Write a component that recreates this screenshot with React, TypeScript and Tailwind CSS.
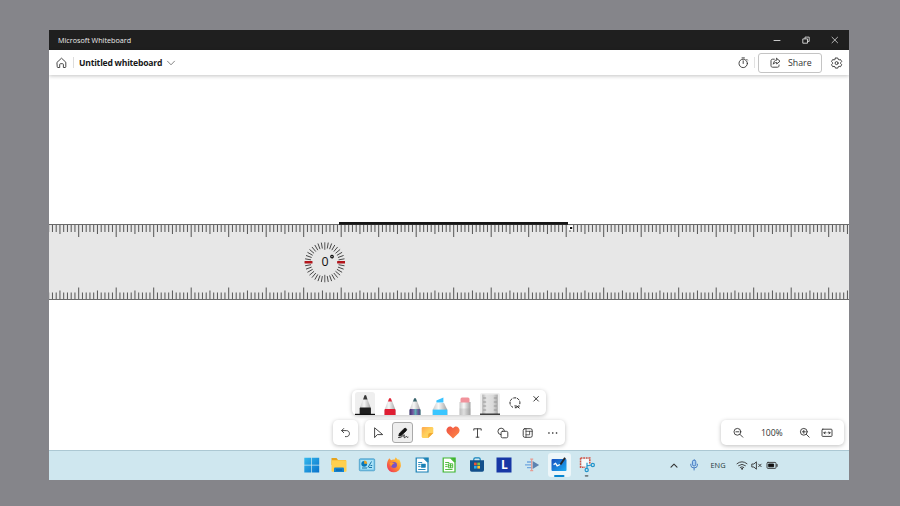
import type { ReactNode } from "react";

type IconProps = { w?: number; h?: number; className?: string; children: ReactNode };

function Icon({ w = 12, h = 12, className = "", children }: IconProps) {
  return (
    <svg
      width={w}
      height={h}
      viewBox={`0 0 ${w} ${h}`}
      fill="none"
      stroke="#333"
      strokeWidth={0.9}
      strokeLinecap="round"
      strokeLinejoin="round"
      className={`block shrink-0 ${className}`}
    >
      {children}
    </svg>
  );
}

function TitleBar() {
  return (
    <div className="flex h-5 shrink-0 items-center bg-[#1f1f1f] pl-[9px] pr-[10px]">
      <span className="flex-1 whitespace-nowrap pt-[2px] text-[7.2px] leading-none text-[#ececec]">Microsoft Whiteboard</span>
      <div className="flex items-center gap-[21px]">
        <Icon w={8} h={8}><path d="M1 4.5h6" stroke="#ddd" /></Icon>
        <Icon w={8} h={8}><path d="M1.2 2.9h4.3v4.3H1.2zM3 2.6V1.1h4.2v4.3H5.8" stroke="#ddd" /></Icon>
        <Icon w={8} h={8}><path d="M1 1.2l5.6 5.6M6.6 1.2L1 6.8" stroke="#ddd" strokeWidth={0.8} /></Icon>
      </div>
    </div>
  );
}

function Header() {
  return (
    <header className="flex h-[25px] shrink-0 items-center bg-white pl-[7px] pr-[6px] shadow-[0_1px_4px_rgba(0,0,0,0.24)]">
      <Icon>
        <path d="M1.2 5.2L5.5 1.2l4.3 4v4.6c0 .4-.2.7-.6.7H7.4V7.5c0-.5-.3-.8-.8-.8H4.5c-.5 0-.8.3-.8.8v3H1.8c-.4 0-.6-.3-.6-.7z" />
      </Icon>
      <div className="ml-[5px] h-[11px] w-px bg-[#ddd]" />
      <span className="ml-[5px] w-[83px] whitespace-nowrap pt-[2px] text-[8.6px] leading-none font-bold tracking-[-0.22px] text-[#171717]">Untitled whiteboard</span>
      <Icon w={10} h={8} className="ml-[4px]"><path d="M1.5 2.2L5 5.8l3.5-3.6" stroke="#666" strokeWidth={0.8} /></Icon>
      <div className="flex-1" />
      <Icon>
        <circle cx="6.2" cy="6.4" r="4.2" />
        <path d="M5 .9h2.4M6.2 3.8v2.7M9.7 2.3l.8.8" />
      </Icon>
      <div className="ml-[5px] h-[11px] w-px bg-[#e2e2e2]" />
      <button className="ml-[3px] flex h-5 w-[64px] items-center rounded-[3px] border border-[#c4c4c4] bg-white pl-[10px]">
        <Icon>
          <path d="M5.3 2.2H3.5c-.9 0-1.5.6-1.5 1.5v5c0 .9.6 1.5 1.5 1.5h5c.9 0 1.5-.6 1.5-1.5V8" />
          <path d="M7.7 1.4L11 4.2 7.7 7V5.5c-1.6 0-2.5.5-3.4 1.7.2-2.5 1.4-4 3.4-4.2z" />
        </Icon>
        <span className="ml-[7px] pt-px text-[8.8px] leading-none text-[#333]">Share</span>
      </button>
      <Icon className="ml-[9px]">
        <path d="M4.4 1h2.4l.4 1.4.9.5 1.4-.4 1.2 2.1-1 1v1.1l1 1-1.2 2-1.4-.4-.9.5-.4 1.3H4.4L4 9.8l-.9-.5-1.4.4-1.2-2 1-1V5.6l-1-1 1.2-2.1 1.4.4.9-.5z" />
        <circle cx="5.6" cy="6.1" r="1.5" />
      </Icon>
    </header>
  );
}

function Ruler() {
  const ticks = Array.from({ length: 214 }, (_, i) => {
    const kind = (i + 2) % 10 === 0 ? 12 : (i + 7) % 10 === 0 ? 9 : 7;
    return { x: -0.3 + i * 3.75, length: kind };
  });
  const dial = Array.from({ length: 36 }, (_, i) => i * 10);
  return (
    <svg width="800" height="79" viewBox="0 0 800 79" className="block shrink-0">
      <rect x="0" y="2" width="800" height="76" fill="#e7e7e7" />
      <path d="M0 2.5H800M0 77.5H800" stroke="#6a6a6a" strokeWidth="1" />
      {ticks.map(({ x, length }) => (
        <path key={x} d={`M${x} 3v${length}M${x} 77v-${length - 0.5}`} stroke="#555" strokeWidth="1" />
      ))}
      <rect x="290" y="0" width="229" height="2.8" fill="#151515" />
      <rect x="519.5" y="3.2" width="4.5" height="5" fill="#fff" />
      <rect x="521" y="5" width="2.2" height="2" fill="#111" />
      <g transform="translate(275.8 40.3)">
        {dial.map((a) => (
          <path
            key={a}
            d={a % 90 === 0 ? "M0 -20V-12.5" : "M0 -20V-14"}
            transform={`rotate(${a})`}
            stroke="#3c3c3c"
            strokeWidth="0.85"
          />
        ))}
        <path d="M-20.2 0h7.8M12.4 0h7.8" stroke="#b3151b" strokeWidth="2.4" />
        <text x="-3.4" y="3.4" fontSize="12.4" fill="#111" fontFamily="Open Sans, sans-serif">0</text>
        <circle cx="7.2" cy="-5.7" r="1.3" fill="none" stroke="#111" strokeWidth="1.2" />
      </g>
    </svg>
  );
}

function Pen({ tip, fill, band }: { tip: string; fill: string; band: number }) {
  return (
    <svg width="12" height="18" viewBox="0 0 12 18" className="block shrink-0">
      <path d="M.5 18v-5L3.9 4h4.2l3.4 9v5z" fill="url(#barrel)" />
      <path d="M3.9 4.6L5.1 1.4q.9-1 1.8 0l1.2 3.2z" fill={tip} />
      <path d={`M.9 ${band}h10.2l.4 1.4V18H.5v-${16.6 - band}z`} fill={fill} />
    </svg>
  );
}

function PenTray() {
  return (
    <div className="ml-[303px] flex h-[25px] w-[194px] items-end rounded-[5px] bg-white pl-[3px] shadow-[0_1px_4px_rgba(0,0,0,0.25)]">
      <svg width="0" height="0" className="block">
        <defs>
          <linearGradient id="barrel">
            <stop offset="0" stopColor="#c9c9c9" />
            <stop offset=".4" stopColor="#f7f7f7" />
            <stop offset="1" stopColor="#a2a2a2" />
          </linearGradient>
          <linearGradient id="plastic">
            <stop offset="0" stopColor="#b4b4b4" />
            <stop offset=".25" stopColor="#e4e4e4" />
            <stop offset=".7" stopColor="#dadada" />
            <stop offset="1" stopColor="#a8a8a8" />
          </linearGradient>
          <linearGradient id="galaxy" x1="0" y1="0" x2="1" y2="0">
            <stop offset="0" stopColor="#37306d" />
            <stop offset=".3" stopColor="#7656a0" />
            <stop offset=".55" stopColor="#5cb0b4" />
            <stop offset=".8" stopColor="#6a4f98" />
            <stop offset="1" stopColor="#2f6a7c" />
          </linearGradient>
        </defs>
      </svg>
      <div className="flex h-[23px] w-5 flex-col items-center justify-end rounded-t-[3px] bg-[#efefef]">
        <svg width="20" height="22" viewBox="0 0 20 22" className="block">
          <path d="M4.7 21v-6L8.2 6h4.2l3.4 9v6z" fill="url(#barrel)" />
          <path d="M8.1 6.5l1.3-3.9q.9-1 1.8 0l1.3 3.9z" fill="#3a3a3a" />
          <path d="M5.1 14.6h10.4l.4 1V21H4.7v-5.4z" fill="#1f1f1f" />
          <path d="M0 21.4h20" stroke="#111" strokeWidth="1.2" />
        </svg>
      </div>
      <div className="ml-[9px]"><Pen tip="#df2638" fill="#df1d32" band={12} /></div>
      <div className="ml-[13px]"><Pen tip="#38636b" fill="url(#galaxy)" band={12} /></div>
      <svg width="16" height="18" viewBox="0 0 16 18" className="ml-[11px] block shrink-0">
        <path d="M.7 18v-5.2L4 6h8l3.3 6.8V18z" fill="url(#barrel)" />
        <path d="M4.4 5.6V3.4L11.4.6v5z" fill="#3ac3ff" />
        <path d="M.7 12.6h14.6V18H.7z" fill="#3ac6ff" />
      </svg>
      <svg width="12" height="18" viewBox="0 0 12 18" className="ml-[11px] block shrink-0">
        <path d="M.5 5h11v13H.5z" fill="url(#barrel)" />
        <path d="M1.5 5.5V2q0-1.5 1.5-1.5h6q1.5 0 1.5 1.5v3.5z" fill="#f1929b" />
        <path d="M.5 11.5h11V18H.5z" fill="#999" opacity=".25" />
      </svg>
      <svg width="20" height="23" viewBox="0 0 20 23" className="ml-[9px] block shrink-0">
        <path d="M0 22V3q0-2 2-2h16q2 0 2 2v19z" fill="#efefef" />
        <path d="M2.2 22V2.5h15.6V22z" fill="url(#plastic)" />
        <path d="M3.2 6h3M3.2 10h3M3.2 14h3M3.2 18h3M16.8 6h-3M16.8 10h-3M16.8 14h-3M16.8 18h-3" stroke="#8a8a8a" strokeWidth=".8" />
        <path d="M0 22.2h20" stroke="#111" strokeWidth="1.2" />
      </svg>
      <Icon w={14} h={14} className="mb-[5px] ml-[8px]">
        <path d="M4.6 11.2A5 5 0 1 1 11.8 8" stroke="#222" strokeDasharray="2.1 1.8" strokeWidth={1} />
        <path d="M6.8 9.8q2.4-.6 4.4 2.2M7.2 11.8q1.6.2 2.2-1t2-.8" stroke="#222" strokeWidth={1} />
      </Icon>
      <Icon w={8} h={8} className="mb-[12px] ml-[10px]"><path d="M1.8 1.5l4.6 4.6M6.4 1.5L1.8 6.1" stroke="#222" /></Icon>
    </div>
  );
}

const panel = "flex h-[25px] items-center rounded-[5px] bg-white shadow-[0_1px_4px_rgba(0,0,0,0.26)]";

function ToolRow() {
  return (
    <div className="mt-[5px] flex pl-[284px] pr-[5px]">
      <div className={`${panel} w-[25px] justify-center`}>
        <Icon><path d="M3.7 1.5L1.6 3.6l2.1 2.1M1.8 3.6h4.7c3.9 0 3.9 6 0 6H5.4" /></Icon>
      </div>
      <div className={`${panel} ml-[7px] w-[200px] pl-[7px]`}>
        <Icon className="mr-[8px]"><path d="M2.6 1.2v9.4l2.7-3h5z" /></Icon>
        <div className="mr-[8px] flex h-[21px] w-[21px] items-center justify-center rounded-[3px] border border-[#aaa] bg-[#eee]">
          <Icon w={14} h={14}>
            <path d="M3.4 7.6L2.8 9.9l2.4-.4 5-4.8q.9-1.1 0-2t-2 0z" fill="#111" stroke="#111" />
            <path d="M2.6 11.6q3 0 4.8-2.4 1.4-1 .8.6-.8 1.8.2 1.8t1.4-.9q.7-.5 1 .3.3.6 1.2.2" stroke="#111" />
          </Icon>
        </div>
        <svg width="13" height="13" viewBox="0 0 13 13" className="mr-[12px] block">
          <defs><linearGradient id="sticky" x2="1" y2="1"><stop stopColor="#ffa64c" /><stop offset=".5" stopColor="#ffd15d" /></linearGradient></defs>
          <path d="M2 1h9q1.3 0 1.3 1.3V7L7.2 12H2.3Q.7 12 .7 10.5V2.4Q.7 1 2 1z" fill="url(#sticky)" />
          <path d="M12.3 7L7.2 12V8.7Q7.2 7 8.8 7z" fill="#f2a832" />
        </svg>
        <svg width="14" height="13" viewBox="0 0 14 13" className="mr-[11px] block">
          <defs><linearGradient id="heart" x2="1" y2="1"><stop stopColor="#ee5145" /><stop offset="1" stopColor="#ff8b45" /></linearGradient></defs>
          <path d="M7 12.5L1.3 7C-1.8 2.5 4-2.3 7 2.2c3-4.5 8.8.3 5.7 4.8z" fill="url(#heart)" />
        </svg>
        <Icon className="mr-[14px]"><path d="M2.8 3.2V1.8h7.4v1.4M6.5 1.8v8.4M5.1 10.2h2.8" /></Icon>
        <Icon className="mr-[13px]">
          <path d="M3.7 7.7A3.3 3.3 0 1 1 7.5 4" />
          <rect x="4.1" y="4.3" width="6.7" height="6.5" rx="1.4" />
        </Icon>
        <Icon className="mr-[13px]">
          <rect x="1.2" y="1.7" width="9" height="8.6" rx="1.6" />
          <path d="M4 1.8v8.4M4 4.3h6.2M4 7.8h3.6V4.3" strokeWidth={0.75} />
        </Icon>
        <Icon><path d="M1.9 6h.1M5.7 6h.1M9.5 6h.1" stroke="#222" strokeWidth={1.6} /></Icon>
      </div>
      <div className="flex-1" />
      <div className={`${panel} w-[123px] pl-[12px]`}>
        <Icon>
          <circle cx="4.4" cy="4.8" r="3.4" /><path d="M7 7.4l2.8 2.8M2.9 4.8h3" />
        </Icon>
        <span className="ml-[16px] w-[23px] whitespace-nowrap pt-[2px] text-[8.7px] leading-none tracking-[-0.1px] text-[#333]">100%</span>
        <Icon className="ml-[15px]">
          <circle cx="4.8" cy="4.8" r="3.4" /><path d="M7.4 7.4l2.8 2.8M3.3 4.8h3M4.8 3.3v3" />
        </Icon>
        <Icon className="ml-[10px]">
          <rect x="1" y="2.2" width="10" height="7.2" rx=".8" />
          <path d="M5 5.8H2.9M3.9 4.8l-1 1 1 1M7 5.8h2.1M8.1 4.8l1 1-1 1" />
        </Icon>
      </div>
    </div>
  );
}

function AppIcon({ children, active }: { children: ReactNode; active?: boolean }) {
  return (
    <div className={active ? "flex h-[24px] w-[23px] items-center justify-center rounded-[3px] bg-[#edf6f9]" : "flex h-[24px] w-[23px] items-center justify-center"}>
      <svg width="18" height="20" viewBox="0 0 18 20" className="block overflow-visible">{children}</svg>
    </div>
  );
}

function DocIcon({ color, sheet }: { color: string; sheet?: boolean }) {
  return (
    <g stroke={color} fill="none">
      <path d="M3.2 3h7.5L15 7.2V17H3.2z" fill="#fff" strokeWidth="1.2" />
      <path d="M11.2 2.7h4.3V7z" fill={color} strokeWidth=".5" />
      <path d="M5.2 7.5h4M5.2 9.6h2.4M5.2 11.6h2.4M5.2 14.5h7.3" strokeWidth=".9" />
      {sheet ? (
        <path d="M8.4 8.8h4.3v4H8.4zM8.4 10.8h4.3M10.5 8.8v4" strokeWidth=".9" />
      ) : (
        <rect x="8.3" y="9" width="4.2" height="3.5" fill={color} strokeWidth=".5" />
      )}
    </g>
  );
}

function Taskbar() {
  return (
    <footer className="flex h-[30px] shrink-0 items-center border-t border-[#acc8d3] bg-[#cfe7ef] pl-[251px]">
      <div className="-mt-px flex gap-[4.55px]">
        <AppIcon>
          <defs><linearGradient id="win" x2="1" y2="1"><stop stopColor="#35b9ed" /><stop offset="1" stopColor="#0872cb" /></linearGradient></defs>
          <path d="M1.3 2.8h7v7h-7zM9 2.8h7.2v7H9zM1.3 10.5h7v7h-7zM9 10.5h7.2v7H9z" fill="url(#win)" />
        </AppIcon>
        <AppIcon>
          <path d="M1.5 3h5l1.5 2h8v5H1.5z" fill="#e6a31c" />
          <rect x="1.5" y="5.2" width="15" height="11.5" rx=".7" fill="#ffd04e" />
          <path d="M4 17v-3.5q0-1 1-1h8q1 0 1 1V17z" fill="#1683ce" />
          <path d="M6 15h6" stroke="#075c9e" />
        </AppIcon>
        <AppIcon>
          <rect x="1.3" y="3.8" width="15.4" height="12" rx="1" fill="#6fc1e6" stroke="#3d96c4" strokeWidth=".7" />
          <rect x="2.5" y="5" width="13" height="9.5" fill="#a9e2f7" />
          <circle cx="6.2" cy="8.8" r="2.9" fill="#0878ba" /><path d="M6.2 8.8V5.4q3 .3 3 3.4z" fill="#f5a51e" />
          <path d="M10 12.5l3.5-6M4 13h5M11 12.5h3M12.5 10.5h1.7" stroke="#1875a7" strokeWidth="1" />
        </AppIcon>
        <AppIcon>
          <defs><linearGradient id="fox" x1="1" x2="0" y2="1"><stop stopColor="#ffe33d" /><stop offset=".45" stopColor="#ff922e" /><stop offset="1" stopColor="#ec2264" /></linearGradient></defs>
          <path d="M4.2 3.2l1.9 2Q8 4.2 9.4 4.7L10.8 2.2q1 1.7 2.4 2.8l.7-1.1q3 4.5 1.5 8.6a6.9 6.9 0 0 1-13.2-.3Q1.2 7.8 4.2 3.2z" fill="url(#fox)" />
          <circle cx="9" cy="10" r="3" fill="#7952c6" />
          <path d="M4.5 8.2q2.6-1.8 5.2.4-3 .4-3.1 2.7-1.2-.2-2.1-3.1z" fill="#ff9b27" />
        </AppIcon>
        <AppIcon><DocIcon color="#1880b5" /></AppIcon>
        <AppIcon><DocIcon color="#3fb62e" sheet /></AppIcon>
        <AppIcon>
          <path d="M5.8 6V4.2q0-1.4 1.4-1.4h3.6q1.4 0 1.4 1.4V6" fill="none" stroke="#1483bc" strokeWidth="1.2" />
          <path d="M2 5.3h14v9.8q0 1.7-1.7 1.7H3.7Q2 16.8 2 15.1z" fill="#124f8b" />
          <path d="M6 7.6h2.7v2.7H6z" fill="#ef5433" /><path d="M9.3 7.6H12v2.7H9.3z" fill="#84c044" />
          <path d="M6 10.9h2.7v2.7H6z" fill="#2daeea" /><path d="M9.3 10.9H12v2.7H9.3z" fill="#ffc22f" />
        </AppIcon>
        <AppIcon>
          <rect x="1.5" y="2.5" width="15" height="15" fill="#1737a5" />
          <text x="6" y="14.2" fontSize="12" fontWeight="700" fontFamily="Open Sans, sans-serif" fill="#fff">L</text>
        </AppIcon>
        <AppIcon>
          <path d="M4 7h5M2 9.8h6M4 12.7h5" stroke="#70a8df" strokeWidth="1.3" />
          <path d="M9.6 6l6.5 4-6.5 4z" fill="#5d83b1" />
          <path d="M7.2 4.2h3M8.7 4.2v11.4M7.2 15.6h3" fill="none" stroke="#e79b92" strokeWidth="1.2" />
        </AppIcon>
        <AppIcon active>
          <defs><linearGradient id="wb" x2="1" y2="1"><stop stopColor="#174dbd" /><stop offset="1" stopColor="#1dadf2" /></linearGradient></defs>
          <rect x="1.5" y="4" width="15" height="12" rx="1" fill="url(#wb)" />
          <path d="M3.6 9.6l2-1.3 1.6 2.6L10 9.5" fill="none" stroke="white" strokeWidth="1.3" />
          <path d="M10.4 9.5l4.7-6.7" stroke="#24272c" strokeWidth="2" />
          <path d="M5 21h8.5" stroke="#0785cf" strokeWidth="2" strokeLinecap="round" />
        </AppIcon>
        <AppIcon>
          <path d="M2.6 3h9.2v5.4M2.6 3v9.2h4.6" fill="none" stroke="#d65343" strokeWidth="1.6" strokeDasharray="1.8 .8" />
          <path d="M3.6 4h7.2v7.2H3.6z" fill="#f6f9fa" />
          <g fill="none" stroke="#2295cb" strokeWidth="1.2"><path d="M9 7.8v5.6M8.8 11l4.4-1" /><circle cx="8.7" cy="15" r="1.6" /><circle cx="14.8" cy="10" r="1.6" /></g>
          <path d="M7.6 20.8h2" stroke="#717c80" strokeWidth="1.7" strokeLinecap="round" />
        </AppIcon>
      </div>
      <div className="flex items-center pl-[70.5px]">
        <Icon w={10} h={10}><path d="M2 6.2l3-3 3 3" strokeWidth={1.1} /></Icon>
        <Icon w={10} h={12} className="-mt-px ml-[10px]">
          <rect x="3.4" y="1" width="3.4" height="6" rx="1.7" fill="#a8cef1" stroke="#3972bd" />
          <path d="M1.8 5.2v1q0 2.7 3.3 2.7t3.3-2.7v-1M5.1 9v2" stroke="#3972bd" />
        </Icon>
        <span className="ml-[11.5px] w-[15.5px] whitespace-nowrap text-[7.4px] leading-none text-[#28383c]">ENG</span>
        <Icon className="ml-[10px]">
          <path d="M1 3.7q5-4 10 0M2.6 5.6q3.4-2.7 6.8 0M4.2 7.4q1.8-1.4 3.6 0" /><circle cx="6" cy="8.8" r=".5" fill="#333" />
        </Icon>
        <Icon className="ml-[3px]"><path d="M1.2 4h1.7l2.5-2.2v7.4L2.9 7H1.2zM7.6 4.1l2.6 2.6M10.2 4.1L7.6 6.7" /></Icon>
        <Icon className="ml-[3px]"><rect x="1" y="2.4" width="9" height="6" rx="1" /><path d="M3 4h4.6v2.8H3z" fill="#111" stroke="#111" /><path d="M11 4.6v1.7" strokeWidth={1.2} /></Icon>
      </div>
    </footer>
  );
}

export default function App() {
  return (
    <main className="h-[506px] w-[900px] overflow-hidden bg-[#85858a] pl-[49px] pt-[30px] font-['Open_Sans','Noto_Sans',sans-serif]">
      <div className="flex h-[450px] w-[800px] flex-col overflow-hidden bg-white">
        <TitleBar />
        <Header />
        <section className="flex h-[375px] shrink-0 flex-col pt-[147px]">
          <Ruler />
          <div className="h-[89px] shrink-0" />
          <PenTray />
          <ToolRow />
        </section>
        <Taskbar />
      </div>
    </main>
  );
}
